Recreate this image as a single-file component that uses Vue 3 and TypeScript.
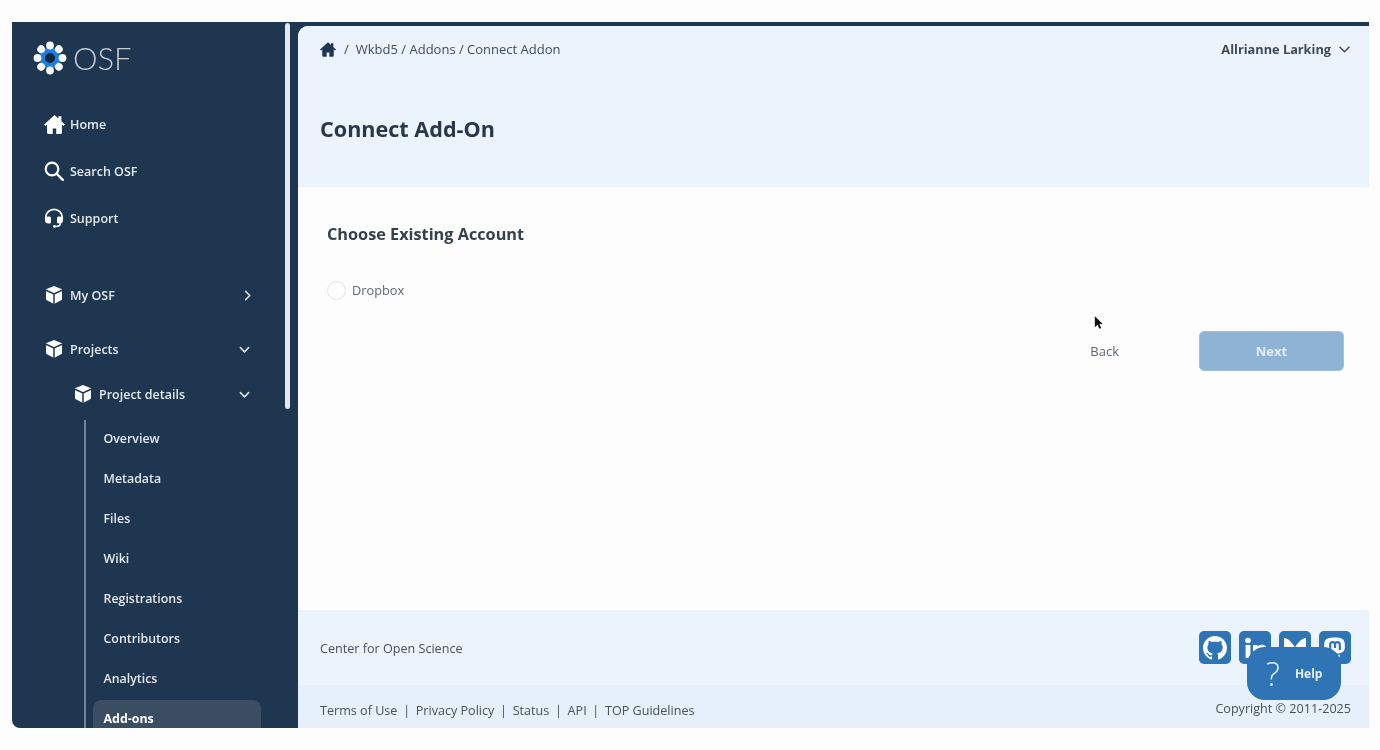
<script setup lang="ts">
const subItems: { label: string; active?: boolean }[] = [
  { label: 'Overview' },
  { label: 'Metadata' },
  { label: 'Files' },
  { label: 'Wiki' },
  { label: 'Registrations' },
  { label: 'Contributors' },
  { label: 'Analytics' },
  { label: 'Add-ons', active: true },
]
const petals = [0, 45, 90, 135, 180, 225, 270, 315]
</script>

<template>
  <div class="page">
    <div class="frame">
      <aside class="sidebar">
        <div class="brand">
          <svg class="logo" viewBox="0 0 34 34" aria-hidden="true">
            <circle cx="17" cy="17" r="10.500" fill="#1c7fe0" />
            <circle cx="17" cy="17" r="5" fill="#12263c" />
            <circle
              v-for="a in petals"
              :key="a"
              cx="17"
              cy="4.500"
              r="3.900"
              fill="#f6f8fa"
              :transform="`rotate(${a} 17 17)`"
            />
          </svg>
          <span class="brand-name">OSF</span>
        </div>

        <nav class="nav">
          <a class="item home">
            <svg class="ico home-ico" viewBox="0 0 24 22" aria-hidden="true">
              <path fill="#fff" d="M12 0 0 11l1.500 1.600L3.400 11v9.500A1.500 1.500 0 0 0 4.900 22H10v-6.500h4V22h5.100a1.500 1.500 0 0 0 1.500-1.500V11l1.900 1.600L24 11l-4-3.700V1.500h-3.500v2.600z" />
            </svg>
            <span class="lbl">Home</span>
          </a>
          <a class="item search">
            <svg class="ico" viewBox="0 0 20 20" aria-hidden="true">
              <circle cx="8" cy="8" r="6.300" fill="none" stroke="#fff" stroke-width="2.200" />
              <path d="m12.800 12.800 6 6" stroke="#fff" stroke-width="2.400" stroke-linecap="round" />
            </svg>
            <span class="lbl">Search OSF</span>
          </a>
          <a class="item support">
            <svg class="ico" viewBox="0 0 20 20" aria-hidden="true">
              <path d="M1.800 11V9.500a8.200 8.200 0 0 1 16.400 0V11" fill="none" stroke="#fff" stroke-width="1.800" />
              <path d="M4.500 8.500h1A1.500 1.500 0 0 1 7 10v4a1.500 1.500 0 0 1-1.500 1.500h-1A3.500 3.500 0 0 1 1 12a3.500 3.500 0 0 1 3.500-3.500z" fill="#fff" />
              <path d="M15.500 8.500h-1A1.500 1.500 0 0 0 13 10v4a1.500 1.500 0 0 0 1.500 1.500h1A3.500 3.500 0 0 0 19 12a3.500 3.500 0 0 0-3.500-3.500z" fill="#fff" />
              <path d="M16.500 15c0 2.500-2 3.500-5 3.500" fill="none" stroke="#fff" stroke-width="1.500" />
              <circle cx="10.500" cy="18.400" r="1.400" fill="#fff" />
            </svg>
            <span class="lbl">Support</span>
          </a>
          <a class="item myosf">
            <svg class="ico" viewBox="0 0 20 20" aria-hidden="true">
              <path fill="#fff" d="M10 1 18 4.200v10.600L10 19 2 14.800V4.200z" />
              <path d="M2 5.200 10 9l8-3.800M10 9v10" fill="none" stroke="#1f3650" stroke-width="1.500" />
            </svg>
            <span class="lbl">My OSF</span>
            <svg class="chev right" viewBox="0 0 12 12" aria-hidden="true"><path d="m4 1.500 4.500 4.500L4 10.500" /></svg>
          </a>
          <a class="item projects">
            <svg class="ico" viewBox="0 0 20 20" aria-hidden="true">
              <path fill="#fff" d="M10 1 18 4.200v10.600L10 19 2 14.800V4.200z" />
              <path d="M2 5.200 10 9l8-3.800M10 9v10" fill="none" stroke="#1f3650" stroke-width="1.500" />
            </svg>
            <span class="lbl">Projects</span>
            <svg class="chev" viewBox="0 0 12 12" aria-hidden="true"><path d="m1.500 4 4.500 4.500L10.500 4" /></svg>
          </a>
          <a class="item details">
            <svg class="ico" viewBox="0 0 20 20" aria-hidden="true">
              <path fill="#fff" d="M10 1 18 4.200v10.600L10 19 2 14.800V4.200z" />
              <path d="M2 5.200 10 9l8-3.800M10 9v10" fill="none" stroke="#1f3650" stroke-width="1.500" />
            </svg>
            <span class="lbl">Project details</span>
            <svg class="chev" viewBox="0 0 12 12" aria-hidden="true"><path d="m1.500 4 4.500 4.500L10.500 4" /></svg>
          </a>
          <div class="subnav">
            <a v-for="s in subItems" :key="s.label" class="sub" :class="{ active: s.active }">{{ s.label }}</a>
          </div>
        </nav>
        <div class="scrollbar"></div>
      </aside>

      <main class="main">
        <header class="head">
          <div class="topbar">
            <div class="crumbs">
              <svg class="crumb-home" viewBox="0 0 24 22" aria-hidden="true">
                <path fill="#1f3650" d="M12 0 0 11l1.500 1.600L3.400 11v9.500A1.500 1.500 0 0 0 4.900 22H10v-6.500h4V22h5.100a1.500 1.500 0 0 0 1.500-1.500V11l1.900 1.600L24 11l-4-3.700V1.500h-3.500v2.600z" />
              </svg>
              <span class="slash">/</span>
              <span>Wkbd5 / Addons / Connect Addon</span>
            </div>
            <div class="user">
              Allrianne Larking
              <svg class="user-chev" viewBox="0 0 14 10" aria-hidden="true"><path d="m1.500 2 5.500 5.500L12.500 2" /></svg>
            </div>
          </div>
          <h1 class="title">Connect Add-On</h1>
        </header>

        <section class="content">
          <h2 class="sub-title">Choose Existing Account</h2>
          <label class="radio-row">
            <span class="radio"></span>
            Dropbox
          </label>
          <div class="actions">
            <button class="back" type="button">Back</button>
            <button class="next" type="button">Next</button>
          </div>
          <svg class="cursor" viewBox="0 0 12 18" aria-hidden="true">
            <path d="M1 1v13l3.200-3 2.300 5 2.200-1-2.300-4.800H10.500z" fill="#111" />
          </svg>
        </section>

        <footer class="foot">
          <div class="foot-top">
            <span>Center for Open Science</span>
            <div class="socials">
              <a class="social">
                <svg viewBox="0 0 16 16" aria-hidden="true">
                  <path fill="#fff" d="M8 0C3.580 0 0 3.580 0 8c0 3.540 2.290 6.530 5.470 7.590.4.070.55-.17.55-.38 0-.19-.01-.82-.01-1.490-2.010.37-2.530-.49-2.690-.94-.09-.23-.48-.94-.82-1.130-.28-.15-.68-.52-.01-.53.63-.01 1.080.58 1.230.82.720 1.210 1.870.87 2.330.66.070-.52.28-.87.51-1.070-1.780-.2-3.640-.89-3.640-3.950 0-.87.31-1.590.82-2.150-.08-.2-.36-1.020.08-2.120 0 0 .67-.21 2.200.82.64-.18 1.320-.27 2-.27.68 0 1.360.09 2 .27 1.530-1.040 2.200-.82 2.200-.82.44 1.100.16 1.920.08 2.120.51.56.82 1.270.82 2.150 0 3.070-1.870 3.750-3.650 3.950.29.25.54.73.54 1.480 0 1.070-.01 1.930-.01 2.200 0 .21.15.46.55.38A8.013 8.013 0 0 0 16 8c0-4.420-3.580-8-8-8z" />
                </svg>
              </a>
              <a class="social">
                <svg viewBox="0 0 24 24" aria-hidden="true">
                  <circle cx="5" cy="4.500" r="2.800" fill="#fff" />
                  <rect x="2.600" y="9" width="4.800" height="13" fill="#fff" />
                  <path fill="#fff" d="M10 9h4.500v2c.8-1.400 2.400-2.300 4.300-2.300 3.600 0 5.200 2.200 5.200 6V22h-4.800v-6.500c0-1.900-.6-3-2.200-3-1.700 0-2.200 1.200-2.200 3V22H10z" />
                </svg>
              </a>
              <a class="social">
                <svg viewBox="0 0 24 24" aria-hidden="true">
                  <path fill="#fff" d="M1 2c4.500.5 8.500 5 11 9.500C14.500 7 18.500 2.500 23 2v9c0 4-3 5.500-6 5.500 2 .5 3 2 2 3.500-2 3-5.500 1-7-3-1.500 4-5 6-7 3-1-1.500 0-3 2-3.500-3 0-6-1.500-6-5.500z" />
                </svg>
              </a>
              <a class="social">
                <svg viewBox="0 0 24 24" aria-hidden="true">
                  <path fill="#fff" d="M12 1.500c-3 0-6.500 0-8.500 1.500C1.800 4.200 1.200 6.500 1.200 9c0 4 0 8 2.300 10.500 3 3 9 3 13.500 1.500v-2.500c-3 1-8 1.500-9.500-1.500 3 .5 6 .8 9 .2 3-.5 5.300-2.200 5.300-5.700V9c0-2.500-.6-4.800-2.300-6C17.500 1.500 15 1.500 12 1.500z" />
                  <path fill="none" stroke="#2f74b5" stroke-width="2.200" d="M7.200 14V8.500c0-3.200 4.800-3.200 4.800 0v3.500m0-3.500c0-3.200 4.800-3.200 4.800 0V14" />
                </svg>
              </a>
            </div>
          </div>
          <div class="foot-bottom">
            <div class="links">
              <span>Terms of Use</span><i>|</i><span>Privacy Policy</span><i>|</i><span>Status</span><i>|</i><span>API</span><i>|</i><span>TOP Guidelines</span>
            </div>
            <span class="copy">Copyright © 2011-2025</span>
          </div>
          <button class="help" type="button">
            <span class="q">?</span>
            <span class="help-label">Help</span>
          </button>
        </footer>
      </main>
    </div>
  </div>
</template>

<style>
html,
body {
  margin: 0;
  background: #fdfdfd;
  overflow: hidden;
}
</style>

<style scoped>
.page {
  height: 750px;
  box-sizing: border-box;
  padding: 22px 11px 22px 12px;
  font-family: "Open Sans", "Noto Sans", sans-serif;
  background: #fdfdfd;
  filter: blur(0.35px);
}
.frame {
  position: relative;
  display: flex;
  height: 706px;
  overflow: hidden;
  background: #1f3650;
  border-bottom-left-radius: 8px;
}
.sidebar {
  position: relative;
  flex: 0 0 286px;
  height: 706px;
  overflow: hidden;
  color: #e4e8ec;
}
.brand {
  display: flex;
  align-items: center;
  height: 34px;
  margin: 19px 0 0 21px;
}
.logo {
  width: 34px;
  height: 34px;
}
.brand-name {
  margin-left: 6px;
  font-family: "Lato", sans-serif;
  font-size: 31px;
  font-weight: 300;
  line-height: 34px;
  color: #c3cad1;
}
.nav {
  display: flex;
  flex-direction: column;
  align-items: flex-start;
}
.item {
  display: flex;
  align-items: center;
  width: 206px;
  height: 24px;
  margin-left: 32px;
  font-size: 12.500px;
  font-weight: 600;
  line-height: 24px;
}
.lbl {
  margin-top: 2px;
}
.ico {
  flex: 0 0 auto;
  width: 20px;
  height: 20px;
  margin-right: 6px;
}
.home-ico {
  width: 21px;
  height: 19px;
  margin-right: 5px;
}
.home { margin-top: 37px; }
.search { margin-top: 23px; }
.support { margin-top: 23px; }
.myosf { margin-top: 53px; }
.projects { margin-top: 30px; }
.details {
  width: 177px;
  margin-top: 21px;
  margin-left: 61px;
}
.chev {
  width: 11px;
  height: 11px;
  margin-left: auto;
  fill: none;
  stroke: #d5dbe1;
  stroke-width: 1.800;
  stroke-linecap: round;
  stroke-linejoin: round;
}
.chev.right {
  margin-right: -3px;
}
.subnav {
  display: flex;
  flex-direction: column;
  align-items: flex-start;
  width: 190px;
  height: 320px;
  box-sizing: border-box;
  margin: 14px 0 0 72px;
  padding-left: 7px;
  border-left: 2px solid #75859a;
}
.sub {
  box-sizing: border-box;
  flex: 0 0 40px;
  width: 168px;
  height: 40px;
  margin-top: -2px;
  margin-bottom: 2px;
  padding: 2px 0 0 10.500px;
  font-size: 12.400px;
  font-weight: 600;
  line-height: 38px;
  border-radius: 8px;
}
.sub.active {
  margin-top: 0;
  padding-top: 1px;
  line-height: 36px;
  font-weight: 700;
  color: #fff;
  background: #3a4d63;
}
.scrollbar {
  position: absolute;
  top: 1px;
  right: 8px;
  width: 5px;
  height: 386px;
  border-radius: 3px;
  background: #e4e7eb;
}
.main {
  display: flex;
  flex: 1;
  flex-direction: column;
  min-width: 0;
  margin-top: 4px;
  overflow: hidden;
  border-top-left-radius: 10px;
  background: #fdfdfd;
}
.head {
  flex: 0 0 161px;
  box-sizing: border-box;
  padding: 0 18px 0 22px;
  background: #ebf3fc;
}
.topbar {
  display: flex;
  align-items: center;
  justify-content: space-between;
  height: 46px;
}
.crumbs {
  display: flex;
  align-items: center;
  font-size: 13px;
  font-weight: 500;
  color: #3c4d60;
}
.crumb-home {
  width: 16px;
  height: 15px;
}
.slash {
  margin: 0 7px 0 8px;
}
.user {
  display: flex;
  align-items: center;
  font-size: 12.750px;
  font-weight: 700;
  color: #3d4a59;
}
.user-chev {
  width: 13px;
  height: 9px;
  margin-left: 7px;
  fill: none;
  stroke: #3d4a59;
  stroke-width: 1.600;
}
.title {
  margin: 40px 0 0;
  font-size: 21.600px;
  font-weight: 700;
  line-height: 33px;
  color: #27384a;
}
.content {
  position: relative;
  flex: 1;
  box-sizing: border-box;
  padding: 36px 25px 0 29px;
}
.sub-title {
  margin: 0;
  font-size: 16.250px;
  font-weight: 700;
  line-height: 23px;
  color: #33414f;
}
.radio-row {
  display: flex;
  align-items: center;
  margin-top: 34px;
  font-size: 12.750px;
  line-height: 20px;
  color: #5c6672;
}
.radio {
  box-sizing: border-box;
  width: 19px;
  height: 19px;
  margin-right: 6px;
  border: 1px solid #e2e5e8;
  border-radius: 50%;
}
.actions {
  display: flex;
  align-items: center;
  justify-content: flex-end;
  margin-top: 31px;
}
.back {
  padding: 0;
  margin-right: 80px;
  border: 0;
  background: none;
  font: inherit;
  font-size: 13px;
  color: #5f6873;
}
.next {
  width: 145px;
  height: 40px;
  border: 1px solid #a4c1dc;
  border-radius: 5px;
  background: #8fb3d4;
  font: inherit;
  font-size: 13px;
  font-weight: 700;
  color: #e4edf5;
}
.cursor {
  position: absolute;
  top: 128px;
  left: 796px;
  width: 10px;
  height: 16px;
}
.foot {
  position: relative;
  flex: 0 0 118px;
  display: flex;
  flex-direction: column;
  background: #ebf3fc;
  font-size: 12.600px;
  color: #46515e;
}
.foot-top {
  display: flex;
  flex: 0 0 75px;
  align-items: center;
  justify-content: space-between;
  box-sizing: border-box;
  padding: 1px 18px 0 22px;
}
.socials {
  display: flex;
  gap: 8px;
  margin-top: -1px;
}
.social {
  display: flex;
  align-items: center;
  justify-content: center;
  width: 32px;
  height: 33px;
  border-radius: 5px;
  background: #2f74b5;
}
.social svg {
  width: 24px;
  height: 24px;
}
.foot-bottom {
  display: flex;
  flex: 1;
  align-items: center;
  justify-content: space-between;
  padding: 3px 18px 0 22px;
  background: #e6f0fa;
}
.links {
  margin-top: 4px;
}
.links i {
  margin: 0 5.700px;
  font-style: normal;
}
.help {
  position: absolute;
  top: 37px;
  right: 28px;
  display: flex;
  align-items: center;
  width: 94px;
  height: 53px;
  padding: 0 0 0 19px;
  border: 0;
  border-radius: 18px;
  background: #2f74b5;
  color: #e6eff7;
  font-family: inherit;
}
.q {
  font-family: "Open Sans", sans-serif;
  font-size: 33px;
  font-weight: 300;
  line-height: 36px;
}
.help-label {
  margin-left: 15px;
  font-size: 12px;
  font-weight: 700;
}
</style>
